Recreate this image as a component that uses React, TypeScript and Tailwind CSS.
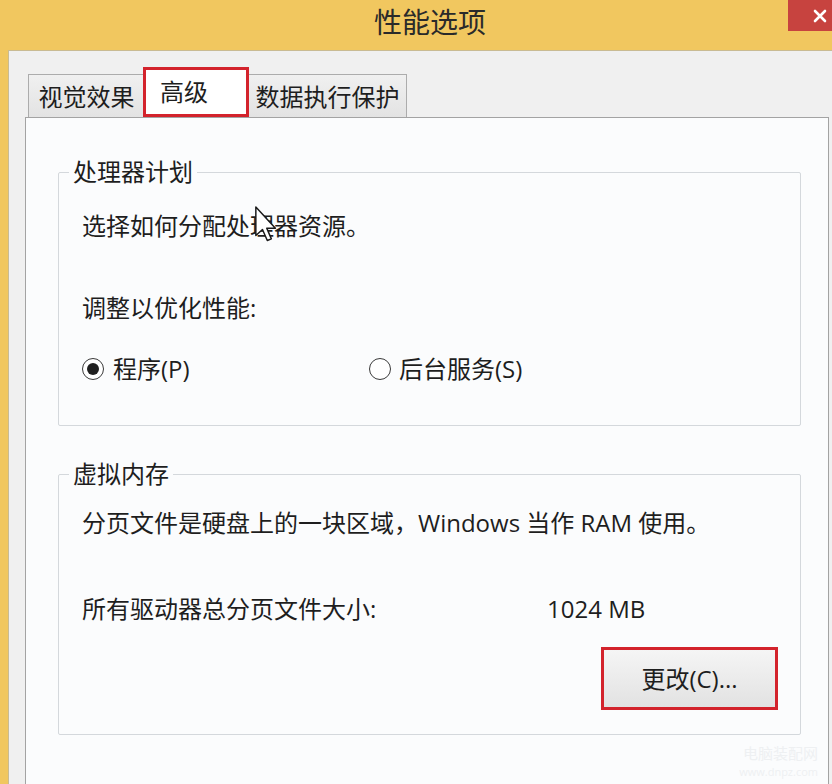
import React from 'react'

function Radio({ checked }: { checked?: boolean }) {
  return (
    <span className="w-[22px] h-[22px] rounded-full border-[1.5px] border-[#3a3a3a] bg-white flex items-center justify-center shrink-0">
      {checked && <span className="w-[12px] h-[12px] rounded-full bg-[#1f1f1f]" />}
    </span>
  )
}

export default function App() {
  return (
    <div className="relative w-[832px] h-[784px] overflow-hidden bg-[#f1c75f] flex flex-col font-['Open_Sans','Noto_Sans_CJK_SC',sans-serif] text-[#1e1e1e]">
      {/* 標題列 */}
      <div className="relative h-[50px] shrink-0 flex items-center justify-center">
        <span className="text-[28px] leading-none text-[#2a2a2a] ml-[28px] -mt-[6px]">性能选项</span>
        <div className="absolute right-0 top-0 w-[44px] h-[31px] bg-[#c7433f] flex items-center justify-end pr-[5px]">
          <svg width="14" height="14" viewBox="0 0 14 14">
            <path d="M2 2 L12 12 M12 2 L2 12" stroke="#fff" strokeWidth="2.6" strokeLinecap="round" />
          </svg>
        </div>
      </div>

      {/* 視窗內容 */}
      <div className="flex-1 ml-[8px] bg-[#f0f0f0] border-l border-t border-[#c9bb93] pl-[16px] pr-[3px] pt-[16px] flex flex-col">
        {/* 分頁 */}
        <div className="flex items-end h-[50px] ml-[3px] text-[24px] leading-none">
          <div className="w-[117px] h-[43px] border border-b-0 border-[#acacac] bg-gradient-to-b from-[#f0f0f0] to-[#e3e3e3] flex items-center justify-center pt-[2px]">
            视觉效果
          </div>
          <div className="-ml-[2px] w-[106px] h-[50px] border-[3px] border-[#d3232c] bg-white flex items-center pl-[14px] relative z-10">
            高级
          </div>
          <div className="-ml-[1px] w-[159px] h-[43px] border border-b-0 border-[#acacac] bg-gradient-to-b from-[#f0f0f0] to-[#e3e3e3] flex items-center justify-center pt-[2px]">
            数据执行保护
          </div>
        </div>

        {/* 分頁面板 */}
        <div className="flex-1 bg-[#fbfcfd] border-t border-l border-r border-[#a3a3a3] pl-[32px] pr-[27px] pt-[39px] text-[24px] leading-[30px]">
          <fieldset className="border border-[#d4d8dc] rounded-[2px] px-0 pb-[41px]">
            <legend className="ml-[10px] px-[4px]">处理器计划</legend>
            <div className="pl-[23px] pt-[24px] flex flex-col">
              <div>选择如何分配处理器资源。</div>
              <div className="mt-[52px]">调整以优化性能:</div>
              <div className="mt-[31px] flex items-center">
                <div className="w-[287px] flex items-center gap-[9px]">
                  <Radio checked />
                  <span>程序(P)</span>
                </div>
                <div className="flex items-center gap-[8px]">
                  <Radio />
                  <span>后台服务(S)</span>
                </div>
              </div>
            </div>
          </fieldset>

          <fieldset className="mt-[33px] border border-[#d4d8dc] rounded-[2px] px-0 pb-[24px]">
            <legend className="ml-[10px] px-[4px]">虚拟内存</legend>
            <div className="pl-[23px] pr-[22px] pt-[19px] flex flex-col">
              <div>分页文件是硬盘上的一块区域，Windows 当作 RAM 使用。</div>
              <div className="mt-[56px] grid grid-cols-[465px_auto]">
                <span>所有驱动器总分页文件大小:</span>
                <span>1024 MB</span>
              </div>
              <div className="mt-[23px] flex justify-end">
                <button className="w-[177px] h-[63px] border-[3px] border-[#d3232c] bg-gradient-to-b from-[#f5f5f5] to-[#e2e2e2] flex items-center justify-center text-[24px] leading-none text-[#1e1e1e]">
                  更改(C)...
                </button>
              </div>
            </div>
          </fieldset>
        </div>
      </div>

      {/* 浮水印 */}
      <div className="absolute right-[14px] bottom-[6px] flex flex-col items-end gap-[3px] text-[#eef0f2]">
        <span className="text-[15px] leading-[18px]">电脑装配网</span>
        <span className="text-[11px] leading-[13px]">www.dnpz.com</span>
      </div>

      {/* 滑鼠游標 */}
      <svg className="absolute left-[254px] top-[205px]" width="24" height="38" viewBox="0 0 13 20.5">
        <path d="M1 1 L1 16.5 L4.6 13.2 L7.2 19.2 L9.4 18.3 L6.9 12.5 L11.6 12.5 Z" fill="#fff" stroke="#1a1a1a" strokeWidth="0.8" strokeLinejoin="round" />
      </svg>
    </div>
  )
}
